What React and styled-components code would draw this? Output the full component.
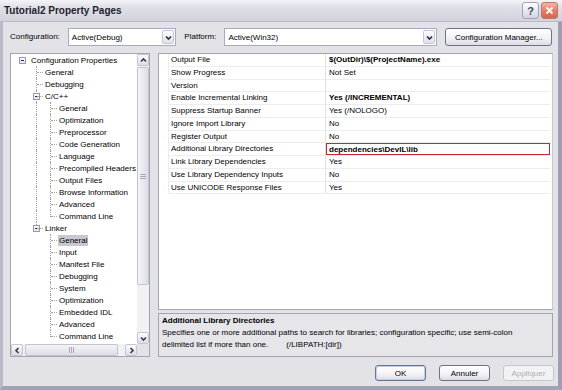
import React from "react";
import styled, { createGlobalStyle, css } from "styled-components";

const GlobalStyle = createGlobalStyle`
  html, body {
    margin: 0;
    padding: 0;
    background: #ffffff;
  }
  body {
    font-family: "Liberation Sans", Arial, sans-serif;
    font-size: 8px;
    color: #000;
  }
  * {
    box-sizing: border-box;
  }
`;

const Window = styled.div`
  width: 562px;
  height: 390px;
  display: flex;
  flex-direction: column;
  overflow: hidden;
`;

const TitleBar = styled.div`
  height: 22px;
  flex: none;
  display: flex;
  align-items: center;
  padding: 0 4px;
  background: linear-gradient(#f4f4f8 0%, #dfdfe7 35%, #d2d2dc 100%);
  border-bottom: 1px solid #b9b9c7;
`;

const Title = styled.div`
  flex: 1;
  font: bold 10px "Liberation Sans", Arial, sans-serif;
  color: #22222c;
`;

const CaptionButton = styled.div`
  width: 17px;
  height: 17px;
  margin-left: 2px;
  border-radius: 3px;
  display: flex;
  align-items: center;
  justify-content: center;
  font: bold 11px "Liberation Sans", Arial, sans-serif;
  color: #4a4a60;
  border: 1px solid ${(p) => (p.$close ? "#b77c70" : "#9fa3b8")};
  background: ${(p) =>
    p.$close
      ? "linear-gradient(#f6b3a4, #e57b63 55%, #d9654c)"
      : "linear-gradient(#ffffff, #e6e7ef 55%, #d3d4e0)"};
`;

const Frame = styled.div`
  flex: 1;
  display: flex;
  flex-direction: column;
  background: #e3e3e7;
  border-left: 3px solid #b9b9c7;
  border-right: 4px solid #9d9db3;
  border-bottom: 4px solid #a3a3b7;
`;

const ConfigRow = styled.div`
  height: 31px;
  display: flex;
  align-items: flex-start;
  gap: 8px;
  padding: 6px 6px 0 7px;
`;

const Label = styled.span`
  line-height: 18px;
  white-space: nowrap;
`;

const Combo = styled.div`
  width: ${(p) => p.$w}px;
  height: 18px;
  display: flex;
  align-items: center;
  background: #fff;
  border: 1px solid #a7abbd;
  padding: 1px 1px 1px 3px;
`;

const ComboText = styled.span`
  flex: 1;
  white-space: nowrap;
`;

const ComboArrow = styled.div`
  width: 12px;
  height: 14px;
  display: flex;
  align-items: center;
  justify-content: center;
  border: 1px solid #c3c6d4;
  border-radius: 2px;
  background: linear-gradient(#fdfdfe, #dfe0e9);
`;

const Button = styled.div`
  width: ${(p) => p.$w}px;
  height: ${(p) => p.$h || 16}px;
  display: flex;
  align-items: center;
  justify-content: center;
  border-radius: 3px;
  white-space: nowrap;
  border: 1px solid ${(p) => (p.$disabled ? "#c6c6ce" : "#6f7186")};
  color: ${(p) => (p.$disabled ? "#aeaeb6" : "#000")};
  background: ${(p) =>
    p.$disabled ? "#f2f2f4" : "linear-gradient(#ffffff, #f1f1f5 60%, #dcdce4)"};
  ${(p) =>
    p.$default &&
    css`
      box-shadow: inset 0 0 0 1px #bcd0ee;
    `}
`;

const Main = styled.div`
  height: 304px;
  display: flex;
  gap: 8px;
  padding: 0 5px 0 7px;
`;

const TreeBox = styled.div`
  width: 140px;
  height: 304px;
  border: 1px solid #a2a4b2;
  background: #fff;
  display: grid;
  grid-template-columns: 1fr 12px;
  grid-template-rows: 1fr 12px;
`;

const TreeList = styled.div`
  overflow: hidden;
  padding-left: 4px;
`;

const TreeRow = styled.div`
  height: 12px;
  display: flex;
  align-items: center;
`;

const Guide = styled.span`
  position: relative;
  width: 14px;
  height: 12px;
  flex: none;
  ${(p) =>
    (p.$type === "pipe" || p.$type === "tee" || p.$type === "elbow") &&
    css`
      &::before {
        content: "";
        position: absolute;
        left: 7px;
        top: 0;
        height: ${p.$type === "elbow" ? "7px" : "12px"};
        border-left: 1px dotted #a3a3a3;
      }
    `}
  ${(p) =>
    (p.$type === "tee" || p.$type === "elbow") &&
    css`
      &::after {
        content: "";
        position: absolute;
        left: 8px;
        top: 6px;
        width: 6px;
        border-top: 1px dotted #a3a3a3;
      }
    `}
`;

const Expander = styled.span`
  position: absolute;
  left: 4px;
  top: 3px;
  width: 7px;
  height: 7px;
  border: 1px solid #919cb2;
  background: linear-gradient(#ffffff, #e4e4ea);
  display: flex;
  align-items: center;
  justify-content: center;

  &::after {
    content: "";
    width: 3px;
    height: 1px;
    background: #2a2a3a;
  }
`;

const TreeLabel = styled.span`
  line-height: 11px;
  padding: 0 1px;
  margin-left: 1px;
  white-space: nowrap;
  background: ${(p) => (p.$selected ? "#c8c8d2" : "transparent")};
`;

const VScroll = styled.div`
  display: flex;
  flex-direction: column;
  background: #f1f1f4;
`;

const HScroll = styled.div`
  display: flex;
  background: #f1f1f4;
`;

const ScrollBtn = styled.div`
  width: 12px;
  height: 12px;
  flex: none;
  display: flex;
  align-items: center;
  justify-content: center;
  border: 1px solid #c4c6d4;
  border-radius: 2px;
  background: linear-gradient(#fdfdfe, #dcdde7);
`;

const Track = styled.div`
  flex: 1;
  display: flex;
  flex-direction: ${(p) => (p.$vertical ? "column" : "row")};
  padding: ${(p) => (p.$vertical ? "1px 0" : "0 0 0 2px")};
`;

const Thumb = styled.div`
  ${(p) =>
    p.$vertical
      ? css`
          height: ${p.$size}px;
          background: linear-gradient(90deg, #f5f5f8, #dcdde6);
        `
      : css`
          width: ${p.$size}px;
          background: linear-gradient(#f5f5f8, #dcdde6);
        `}
  border: 1px solid #c1c3d1;
  border-radius: 2px;
  display: flex;
  align-items: center;
  justify-content: center;
`;

const Grip = styled.span`
  ${(p) =>
    p.$vertical
      ? css`
          width: 6px;
          height: 5px;
          background: repeating-linear-gradient(#a8a8b8 0 1px, transparent 1px 2px);
        `
      : css`
          width: 5px;
          height: 6px;
          background: repeating-linear-gradient(90deg, #a8a8b8 0 1px, transparent 1px 2px);
        `}
`;

const Corner = styled.div`
  background: #e3e3e7;
`;

const RightPane = styled.div`
  flex: 1;
  display: flex;
  flex-direction: column;
  gap: 3px;
`;

const Grid = styled.div`
  height: 257px;
  background: #fff;
  border: 1px solid #a2a4b2;
  border-right-color: #c8c8d0;
  display: flex;
  flex-direction: column;
  padding-right: 2px;
`;

const PropRow = styled.div`
  display: grid;
  grid-template-columns: 10px 157px 1fr;
  height: 12.75px;
  flex: none;
`;

const Gutter = styled.div`
  border-right: 1px solid #ececf0;
`;

const NameCell = styled.div`
  padding-left: 2px;
  line-height: 12px;
  white-space: nowrap;
  overflow: hidden;
  border-bottom: 1px solid #ededf0;
  border-right: 1px solid #e2e2e6;
`;

const ValueCell = styled.div`
  padding-left: 3px;
  line-height: 12px;
  white-space: nowrap;
  overflow: hidden;
  font-weight: ${(p) => (p.$bold ? 700 : 400)};
  border-bottom: 1px solid #ededf0;
  ${(p) =>
    p.$active &&
    css`
      box-shadow: inset 0 0 0 1px #c7282e;
      line-height: 13px;
    `}
`;

const Desc = styled.div`
  height: 44px;
  border: 1px solid #a2a4b2;
  background: #e6e5ea;
  padding: 1px 3px;
`;

const DescTitle = styled.div`
  font-weight: 700;
  line-height: 12px;
`;

const DescText = styled.div`
  line-height: 12px;
  white-space: nowrap;
`;

const Switch = styled.span`
  margin-left: 18px;
`;

const ButtonRow = styled.div`
  flex: 1;
  display: flex;
  justify-content: flex-end;
  align-items: flex-start;
  gap: 13px;
  padding: 8px 4px 0 0;
`;

const Chevron = ({ dir = "down", color = "#3c3c50" }) => {
  const pts = {
    down: "1,2.5 3.5,5 6,2.5",
    up: "1,4.5 3.5,2 6,4.5",
    left: "4.5,1 2,3.5 4.5,6",
    right: "2.5,1 5,3.5 2.5,6",
  }[dir];
  return (
    <svg width="7" height="7" viewBox="0 0 7 7">
      <polyline points={pts} fill="none" stroke={color} strokeWidth="1.7" />
    </svg>
  );
};

const CloseGlyph = () => (
  <svg width="9" height="9" viewBox="0 0 9 9">
    <path d="M1.5 1.5 L7.5 7.5 M7.5 1.5 L1.5 7.5" stroke="#fff" strokeWidth="1.8" />
  </svg>
);

const tree = [
  { label: "Configuration Properties", guides: ["root"] },
  { label: "General", guides: ["", "tee"] },
  { label: "Debugging", guides: ["", "tee"] },
  { label: "C/C++", guides: ["", "tee"], open: true },
  { label: "General", guides: ["", "pipe", "tee"] },
  { label: "Optimization", guides: ["", "pipe", "tee"] },
  { label: "Preprocessor", guides: ["", "pipe", "tee"] },
  { label: "Code Generation", guides: ["", "pipe", "tee"] },
  { label: "Language", guides: ["", "pipe", "tee"] },
  { label: "Precompiled Headers", guides: ["", "pipe", "tee"] },
  { label: "Output Files", guides: ["", "pipe", "tee"] },
  { label: "Browse Information", guides: ["", "pipe", "tee"] },
  { label: "Advanced", guides: ["", "pipe", "tee"] },
  { label: "Command Line", guides: ["", "pipe", "elbow"] },
  { label: "Linker", guides: ["", "elbow"], open: true },
  { label: "General", guides: ["", "", "tee"], selected: true },
  { label: "Input", guides: ["", "", "tee"] },
  { label: "Manifest File", guides: ["", "", "tee"] },
  { label: "Debugging", guides: ["", "", "tee"] },
  { label: "System", guides: ["", "", "tee"] },
  { label: "Optimization", guides: ["", "", "tee"] },
  { label: "Embedded IDL", guides: ["", "", "tee"] },
  { label: "Advanced", guides: ["", "", "tee"] },
  { label: "Command Line", guides: ["", "", "elbow"] },
];

const properties = [
  ["Output File", "$(OutDir)\\$(ProjectName).exe", true],
  ["Show Progress", "Not Set"],
  ["Version", ""],
  ["Enable Incremental Linking", "Yes (/INCREMENTAL)", true],
  ["Suppress Startup Banner", "Yes (/NOLOGO)"],
  ["Ignore Import Library", "No"],
  ["Register Output", "No"],
  ["Additional Library Directories", "dependencies\\DevIL\\lib", true, true],
  ["Link Library Dependencies", "Yes"],
  ["Use Library Dependency Inputs", "No"],
  ["Use UNICODE Response Files", "Yes"],
];

const Tree = () => (
  <TreeBox>
    <TreeList>
      {tree.map((node, i) => {
        const last = node.guides.length - 1;
        return (
          <TreeRow key={i}>
            {node.guides.map((g, j) => (
              <Guide key={j} $type={g}>
                {j === last && (g === "root" || node.open) && <Expander />}
              </Guide>
            ))}
            <TreeLabel $selected={node.selected}>{node.label}</TreeLabel>
          </TreeRow>
        );
      })}
    </TreeList>
    <VScroll>
      <ScrollBtn>
        <Chevron dir="up" />
      </ScrollBtn>
      <Track $vertical>
        <Thumb $vertical $size={218}>
          <Grip $vertical />
        </Thumb>
      </Track>
      <ScrollBtn>
        <Chevron dir="down" />
      </ScrollBtn>
    </VScroll>
    <HScroll>
      <ScrollBtn>
        <Chevron dir="left" />
      </ScrollBtn>
      <Track>
        <Thumb $size={93}>
          <Grip />
        </Thumb>
      </Track>
      <ScrollBtn>
        <Chevron dir="right" />
      </ScrollBtn>
    </HScroll>
    <Corner />
  </TreeBox>
);

export default function App() {
  return (
    <>
      <GlobalStyle />
      <Window>
        <TitleBar>
          <Title>Tutorial2 Property Pages</Title>
          <CaptionButton>?</CaptionButton>
          <CaptionButton $close>
            <CloseGlyph />
          </CaptionButton>
        </TitleBar>
        <Frame>
          <ConfigRow>
            <Label>Configuration:</Label>
            <Combo $w={109}>
              <ComboText>Active(Debug)</ComboText>
              <ComboArrow>
                <Chevron dir="down" color="#2a3050" />
              </ComboArrow>
            </Combo>
            <Label>Platform:</Label>
            <Combo $w={214}>
              <ComboText>Active(Win32)</ComboText>
              <ComboArrow>
                <Chevron dir="down" color="#2a3050" />
              </ComboArrow>
            </Combo>
            <Button $w={107} $h={18}>
              Configuration Manager...
            </Button>
          </ConfigRow>
          <Main>
            <Tree />
            <RightPane>
              <Grid>
                {properties.map(([name, value, bold, active], i) => (
                  <PropRow key={i}>
                    <Gutter />
                    <NameCell>{name}</NameCell>
                    <ValueCell $bold={bold} $active={active}>
                      {value}
                    </ValueCell>
                  </PropRow>
                ))}
              </Grid>
              <Desc>
                <DescTitle>Additional Library Directories</DescTitle>
                <DescText>
                  Specifies one or more additional paths to search for libraries;
                  configuration specific; use semi-colon
                </DescText>
                <DescText>
                  delimited list if more than one.
                  <Switch>(/LIBPATH:[dir])</Switch>
                </DescText>
              </Desc>
            </RightPane>
          </Main>
          <ButtonRow>
            <Button $w={51} $default>
              OK
            </Button>
            <Button $w={51}>Annuler</Button>
            <Button $w={51} $disabled>
              Appliquer
            </Button>
          </ButtonRow>
        </Frame>
      </Window>
    </>
  );
}
